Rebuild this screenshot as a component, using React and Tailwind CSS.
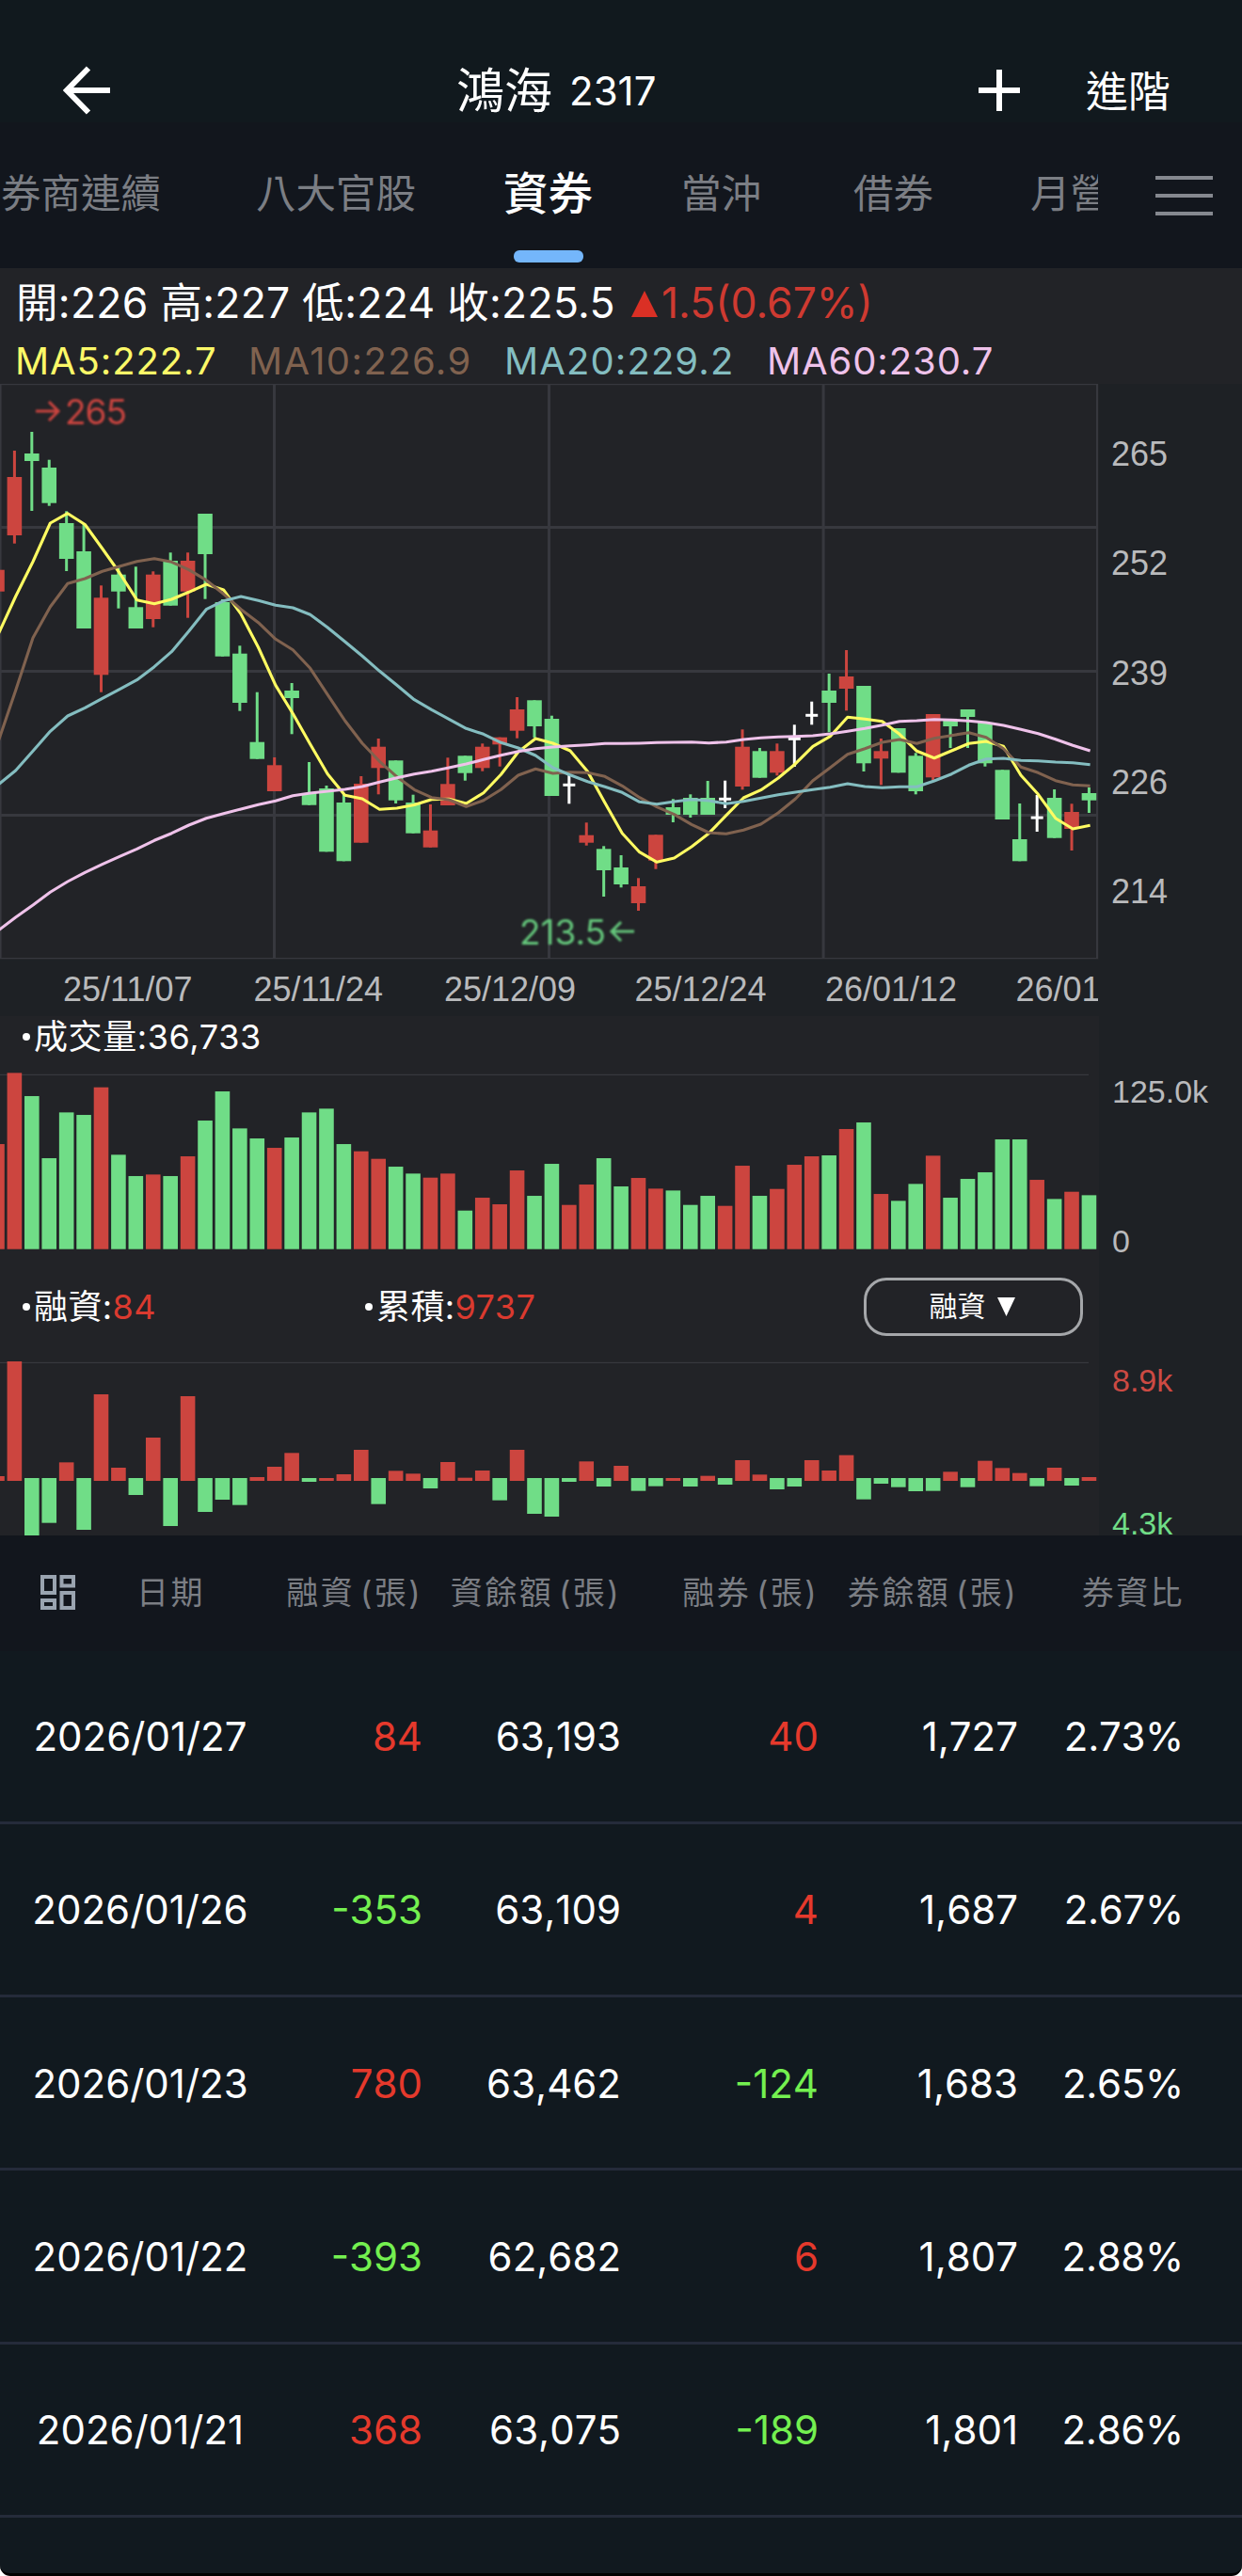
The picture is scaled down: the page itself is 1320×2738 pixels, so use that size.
const RED = "#cc453f";
const GREEN = "#70dd87";
const PITCH = 18.42;
const BAR_W = 15.6;
const barX = (i) => 7.6 + PITCH * (i - 1);
const midX = (i) => 15.4 + PITCH * (i - 1);
const lineX = (i) => 16.6 + PITCH * (i - 1);

/* [colour, high, body top, body bottom, low] */
const CANDLES = [
  ["r", 605.7, 605.7, 628.7, 628.7], ["r", 479, 507, 569, 577.7], ["g", 459, 482, 490, 543],
  ["g", 488.7, 497, 534.7, 537.7], ["g", 543.3, 556, 594, 607], ["g", 557, 586, 668, 668],
  ["r", 622.3, 635.3, 717.3, 735.7], ["g", 603, 610.7, 628.7, 646.7], ["g", 602.3, 645.3, 668, 668],
  ["r", 607.3, 610.7, 658, 666.7], ["g", 587.3, 596, 643.7, 643.7], ["r", 587.3, 596, 628.7, 656.7],
  ["g", 546, 546, 589, 636.7], ["g", 637, 640, 697.7, 697.7], ["g", 686.3, 694.7, 747, 755.7],
  ["g", 735.7, 788.7, 806.7, 806.7], ["r", 805, 813.3, 841, 841], ["g", 726, 734, 742, 780.3],
  ["g", 810, 843, 855.7, 855.7], ["g", 835, 838, 905.3, 905.3], ["g", 844, 853, 915.3, 915.3],
  ["r", 825, 833, 895.7, 895.7], ["r", 785, 793.7, 816.3, 844.3], ["g", 808.3, 808.3, 850.7, 854],
  ["g", 844.7, 853, 885.7, 885.7], ["r", 855, 882.7, 900.7, 900.7], ["r", 805.3, 833.3, 856, 856],
  ["g", 803.3, 803.3, 821.7, 829.7], ["r", 790.3, 793.7, 816.3, 819.7], ["r", 783.7, 783.7, 791.3, 814.7],
  ["r", 741, 754, 776.7, 784.7], ["g", 744.3, 744.3, 772, 784], ["g", 760.7, 764, 846, 846],
  ["w", 824, 832.8, 835.8, 854.3], ["r", 874.3, 887.7, 895.7, 898.7], ["g", 899.3, 902.3, 925, 953],
  ["g", 909, 922, 940, 943.3], ["r", 933.3, 942, 960, 968], ["r", 887.3, 887.3, 914.7, 923.7],
  ["g", 849.3, 858, 866, 874], ["g", 844.3, 848, 866, 869], ["g", 830, 848, 866, 866],
  ["w", 829.7, 847.8, 850.8, 859], ["r", 775.3, 793.7, 836, 839.3], ["g", 795, 798.3, 826.7, 826.7],
  ["r", 790.3, 798.3, 821.3, 824.3], ["w", 770.3, 783.8, 786.8, 815], ["w", 745.7, 758.8, 761.8, 770.3],
  ["g", 716, 734, 747, 778.3], ["r", 691, 719, 732, 755.3], ["g", 729, 729, 811.3, 820],
  ["r", 785, 798.3, 806.3, 834.3], ["g", 774, 774, 821.3, 821.3], ["g", 800.3, 803.3, 841, 844.3],
  ["r", 759, 759, 826.3, 829.3], ["g", 765, 765, 772, 795], ["g", 754, 754, 762, 795],
  ["g", 768, 768, 811.3, 814.7], ["g", 818.3, 818.3, 871, 871], ["g", 854, 892, 915.3, 915.3],
  ["w", 845, 867.6, 870.6, 884], ["g", 839, 848, 890.7, 890.7], ["r", 854.3, 863, 881, 904],
  ["g", 837, 843, 850.7, 864],
];

const MA5 = [674, 634, 597, 556, 545.7, 557.5, 583, 609, 637.7, 641.7, 637, 629.3, 621, 627, 652.7, 688, 728.4, 758.5, 791, 822.7, 845.3, 849, 860.3, 859, 855.5, 849.7, 849.3, 854, 842.7, 823.3, 799.3, 785, 790, 798, 820, 853.3, 885.7, 905.7, 916.3, 912, 900, 885.7, 866.7, 848, 839.7, 827, 811.7, 793.3, 782.7, 762.3, 764.3, 766.7, 780.3, 798.3, 805.7, 798, 790.3, 788, 793.3, 824, 844.3, 869.7, 881, 877.3];
const MA10 = [788, 734, 678, 645, 620.3, 615, 607.3, 602, 596.7, 593.7, 597.3, 605.7, 616.7, 631.3, 647.7, 661.7, 679.3, 690.7, 710.3, 738.3, 766, 790, 809.3, 825.7, 839.3, 847.7, 850, 857.3, 850.7, 839.3, 824, 817.3, 822, 820.7, 821.3, 825.3, 835.3, 847.7, 857.7, 865.7, 876.3, 885, 886.3, 882.3, 876, 864, 849, 829.7, 816, 801.7, 795.7, 789, 786, 790.3, 784.7, 781.7, 778.7, 783.7, 795.7, 815.3, 821.3, 829.7, 834.3, 835.3];
const MA20 = [834, 819, 798.3, 777.3, 761, 752.3, 742.3, 732.7, 722.7, 708.7, 692.7, 670.7, 647.7, 638.7, 634, 638.3, 643.3, 646, 653.3, 667, 682, 697.3, 713.3, 728.3, 743.7, 754.3, 764.3, 774.3, 780.3, 789.3, 795, 803, 816, 823.7, 830.7, 836.3, 842.3, 852.3, 854.7, 852, 849.7, 851, 854.3, 851.7, 848.3, 844.7, 842, 839.3, 836.7, 833, 836, 837.3, 836.3, 836.3, 830, 822.7, 813.3, 806.7, 806, 808.3, 808.7, 810, 810.7, 812.7];
const MA60 = [989, 975, 962, 948.3, 937, 927.3, 918.7, 910.3, 902.3, 893.3, 885.7, 877, 869.7, 864.7, 860, 855.3, 851.3, 845.7, 843, 841, 839, 836, 831.3, 826.7, 822.7, 819.7, 816, 812, 807.3, 802.7, 798.7, 795.7, 794, 792.7, 791.7, 790.3, 790.3, 790, 789.3, 789, 788.7, 789.7, 788.7, 786, 784.3, 783.3, 782.7, 782, 780, 777.3, 774.3, 770.7, 766.7, 766, 764.7, 765.3, 766.3, 768, 771, 775.3, 779.7, 785.7, 792.3, 798];

/* Bar heights in thirds of a pixel */
const VOLUME = [335, 562, 488, 290, 436, 428, 516, 301, 233, 238, 233, 296, 410, 503, 385, 353, 323, 356, 436, 448, 335, 312, 288, 263, 241, 228, 241, 123, 164, 143, 251, 170, 272, 141, 206, 290, 200, 227, 193, 187, 141, 170, 138, 266, 170, 192, 269, 296, 299, 383, 404, 176, 154, 208, 298, 164, 224, 245, 350, 350, 221, 160, 183, 172];
const VOLUME_COLORS = "rrggggrggrgrggggrggggrrggrrgrrrggrrggrrgggrrgrrrgrgrggrgggggrgrg";

/* Positive = increase, negative = decrease */
const MARGIN = [15, 381, -186, -143, 59, -165, 276, 42, -54, 138, -153, 270, -108, -69, -86, 12, 45, 89, -12, 9, 21, 99, -83, 32, 23, -33, 60, 10, 33, -71, 99, -114, -123, -12, 62, -27, 48, -41, -26, 9, -27, 16, -21, 66, 20, -36, -27, 66, 33, 82, -68, -18, -29, -42, -41, 29, -29, 64, 41, 25, -26, 42, -24, 12];

const COLORS = { r: RED, g: GREEN, w: "#ffffff" };
const points = (arr) => arr.map((y, i) => `${lineX(i).toFixed(1)},${y}`).join(" ");

function CandleChart() {
  return (
    <svg className="block h-[612px] w-[1168px] shrink-0" viewBox="0 408 1168 612">
      <g fill="#37383e">
        <rect x="0" y="408" width="1167" height="1.2" />
        <rect x="0" y="559" width="1167" height="3" />
        <rect x="0" y="712" width="1167" height="3" />
        <rect x="0" y="865" width="1167" height="3" />
        <rect x="0" y="1018" width="1167" height="1.2" />
        <rect x="0" y="408" width="1.6" height="611" />
        <rect x="290" y="408" width="3" height="611" />
        <rect x="582" y="408" width="3" height="611" />
        <rect x="873.6" y="408" width="3" height="611" />
        <rect x="1165" y="408" width="2" height="611" />
      </g>
      {CANDLES.map(([c, hi, top, bot, lo], i) => (
        <g key={i} fill={COLORS[c]}>
          <rect x={midX(i) - 1.5} y={hi} width="3" height={lo - hi} />
          <rect x={midX(i) - (c === "w" ? 6.5 : 7.8)} y={top} width={c === "w" ? 13 : BAR_W} height={bot - top} />
        </g>
      ))}
      <g fill="none" strokeWidth="3.1" strokeLinejoin="round">
        <polyline points={points(MA5)} stroke="#fffb62" />
        <polyline points={points(MA10)} stroke="#80624f" />
        <polyline points={points(MA20)} stroke="#84bdc0" />
        <polyline points={points(MA60)} stroke="#efc2ea" />
      </g>
      <g className="font-['Inter'] blur-[0.8px]" fontSize="37">
        <text x="69" y="451" fill="#c9443f" textLength="66">265</text>
        <path d="M38 437H62M52 427L62 437L52 447" fill="none" stroke="#c9443f" strokeWidth="3" />
        <text x="552" y="1004" fill="#64c67b" textLength="92">213.5</text>
        <path d="M674 990H650M660 980L650 990L660 1000" fill="none" stroke="#64c67b" strokeWidth="3" />
      </g>
    </svg>
  );
}

function VolumeChart() {
  return (
    <svg className="block h-[190px] w-[1168px]" viewBox="0 1140 1168 190">
      <rect x="0" y="1141.8" width="1157" height="1.2" fill="#37383e" />
      {VOLUME.map((h, i) => (
        <rect key={i} x={barX(i)} y={1327.7 - h / 3} width={BAR_W} height={h / 3} fill={COLORS[VOLUME_COLORS[i]]} />
      ))}
    </svg>
  );
}

function MarginChart() {
  return (
    <svg className="block h-[186px] w-[1168px]" viewBox="0 1446 1168 186">
      <rect x="0" y="1447.8" width="1157" height="1.2" fill="#37383e" />
      {MARGIN.map((v, i) => (
        <rect key={i} x={barX(i)} y={v > 0 ? 1574 - v / 3 : 1571} width={BAR_W} height={Math.abs(v) / 3} fill={v > 0 ? RED : GREEN} />
      ))}
    </svg>
  );
}

function TopBar() {
  return (
    <header className="flex h-[130px] items-end bg-[#11191e] pb-[4px] pl-[67px]">
      <div className="flex h-[60px] w-full items-center">
        <svg className="h-[52px] w-[52px]" viewBox="0 0 52 52" fill="none" stroke="#fff" strokeWidth="6">
          <path d="M50 26H5M27 2.5L4 26L27 49.5" />
        </svg>
        <h1 className="ml-[366px] flex w-[400px] items-center whitespace-nowrap pt-[2px] text-[51px] leading-[60px] text-white">
          <span>鴻海</span>
          <span className="ml-[18px] text-[42px]">2317</span>
        </h1>
        <svg className="ml-[155px] h-[44px] w-[44px]" viewBox="0 0 44 44" fill="none" stroke="#fff" strokeWidth="6">
          <path d="M22 0V44M0 22H44" />
        </svg>
        <span className="ml-[70px] whitespace-nowrap pt-[3px] text-[45px] leading-[60px] text-white">進階</span>
      </div>
    </header>
  );
}

function Tabs() {
  return (
    <nav className="flex h-[155px] bg-[#12161d]">
      <div className="flex h-full w-[1167px] overflow-hidden whitespace-nowrap text-[42.5px] leading-[60px] text-[#7b7e84]">
        <span className="ml-px pt-[46px]">券商連續</span>
        <span className="ml-[101px] pt-[46px]">八大官股</span>
        <span className="ml-[93px] flex flex-col items-center pt-[46px] text-[47.5px] font-medium text-white">
          資券
          <i className="mt-[30px] h-[13px] w-[74px] rounded-[6px] bg-[#74b6fb]" />
        </span>
        <span className="ml-[94px] pt-[46px]">當沖</span>
        <span className="ml-[98px] pt-[46px]">借券</span>
        <span className="ml-[103px] pt-[46px]">月營收</span>
      </div>
      <div className="ml-[61px] mt-[57px] flex h-[42px] w-[61px] flex-col justify-between">
        <i className="h-[4px] bg-[#85888f]" />
        <i className="h-[4px] bg-[#85888f]" />
        <i className="h-[4px] bg-[#85888f]" />
      </div>
    </nav>
  );
}

const AXIS = ["265", "252", "239", "226", "214"];
const DATES = ["25/11/07", "25/11/24", "25/12/09", "25/12/24", "26/01/12", "26/01/27"];
const LIB = "font-['Liberation_Sans']";

function Dot() {
  return <i className="mr-[4px] h-[8px] w-[8px] rounded-full bg-white" />;
}

function ChartPanel() {
  return (
    <section className="h-[1347px] overflow-hidden bg-[#222327]">
      <div className="flex h-[72px] items-center whitespace-pre pl-[17px] pt-[3px] text-[44.5px] text-white">
        <span className="tracking-[0.28px]">開:226 高:227 低:224 收:225.5</span>
        <svg className="ml-[17px] h-[28px] w-[28px]" viewBox="0 0 28 28"><path d="M14 0L28 28H0Z" fill="#da3025" /></svg>
        <span className="ml-[4px] text-[#cf3a31]">1.5(0.67%)</span>
      </div>
      <div className="flex h-[51px] items-center whitespace-nowrap pl-[16px] pt-[2px] text-[40px] tracking-[0.9px]">
        <span className="w-[248px] text-[#fbf868]">MA5:222.7</span>
        <span className="w-[272px] tracking-[1.4px] text-[#80624f]">MA10:226.9</span>
        <span className="w-[279px] tracking-[1.1px] text-[#84bdc0]">MA20:229.2</span>
        <span className="text-[#efc2ea]">MA60:230.7</span>
      </div>
      <div className="flex h-[612px]">
        <CandleChart />
        <div className={"flex w-[152px] flex-col bg-[#1e2125] pl-[13px] pt-[45px] text-[36px] leading-[60px] text-[#b9babc] " + LIB}>
          {AXIS.map((v) => <span key={v} className="h-[116.3px] shrink-0">{v}</span>)}
        </div>
      </div>
      <div className="h-[60px] bg-[#1e2125]">
        <div className={"flex h-full w-[1167px] overflow-hidden whitespace-nowrap pl-[67px] text-[36px] leading-[64px] text-[#b9babc] " + LIB}>
          {DATES.map((d) => <span key={d} className="w-[202.5px] shrink-0">{d}</span>)}
        </div>
      </div>
      <div className="flex h-[552px]">
        <div className="w-[1168px]">
          <div className="flex h-[60px] items-center pb-[17px] pl-[24px] text-[36px] tracking-[0.6px] text-white">
            <Dot />
            <span>成交量:36,733</span>
          </div>
          <VolumeChart />
          <div className="flex h-[116px] items-center whitespace-nowrap pl-[24px] pt-px text-[36px] tracking-[0.4px] text-white">
            <div className="flex w-[364px] items-center"><Dot />融資:<span className="text-[#da3a2f]">84</span></div>
            <div className="flex w-[530px] items-center"><Dot />累積:<span className="text-[#da3a2f]">9737</span></div>
            <button className="flex h-[62px] w-[233px] items-center justify-center rounded-[24px] border-3 border-[#a5a7aa] pr-[3px] text-[30px] tracking-normal">
              融資
              <svg className="ml-[12px] h-[20px] w-[19px]" viewBox="0 0 19 20"><path d="M0 0H19L9.5 20Z" fill="#fff" /></svg>
            </button>
          </div>
          <MarginChart />
        </div>
        <div className={"flex w-[152px] flex-col bg-[#1e2125] pl-[14px] text-[34px] leading-[40px] text-[#b9babc] " + LIB}>
          <span className="pt-[60px]">125.0k</span>
          <span className="pt-[119px]">0</span>
          <span className="pt-[108px] text-[#cc4a43]">8.9k</span>
          <span className="pt-[112px] text-[#70dd87]">4.3k</span>
        </div>
      </div>
    </section>
  );
}

const ROWS = [
  ["2026/01/27", "84", "63,193", "40", "1,727", "2.73%"],
  ["2026/01/26", "-353", "63,109", "4", "1,687", "2.67%"],
  ["2026/01/23", "780", "63,462", "-124", "1,683", "2.65%"],
  ["2026/01/22", "-393", "62,682", "6", "1,807", "2.88%"],
  ["2026/01/21", "368", "63,075", "-189", "1,801", "2.86%"],
];
const tone = (v) => (v.startsWith("-") ? "text-[#74f050]" : "text-[#e5392c]");
const COLS = "grid items-center whitespace-nowrap text-right";

function Table() {
  return (
    <section>
      <div className={COLS + " h-[122.5px] grid-cols-[299px_150px_211px_210px_212px_177px] grid-rows-1 bg-[#12161d] pb-px text-[34px] tracking-[2.4px] text-[#7b7e84] [word-spacing:-6px]"}>
        <div className="flex items-center pl-[43px]">
          <svg className="h-[37px] w-[37px]" viewBox="0 0 37 37" fill="none" stroke="#9aa4b0" strokeWidth="4">
            <path d="M2 2H15V19H2ZM22.5 2H35V11.5H22.5ZM2 27H15V35H2ZM22.5 19H35V35H22.5Z" />
          </svg>
          <span className="ml-[65px]">日期</span>
        </div>
        <span>融資 (張)</span>
        <span>資餘額 (張)</span>
        <span>融券 (張)</span>
        <span>券餘額 (張)</span>
        <span>券資比</span>
      </div>
      {ROWS.map((r) => (
        <div key={r[0]} className={COLS + " h-[184.3px] grid-cols-[298px_151px_211px_210px_212px_176px] border-b-3 border-[#252b3a] pt-px text-[42px] text-white [font-kerning:none]"}>
          <span className="text-center">{r[0]}</span>
          <span className={tone(r[1])}>{r[1]}</span>
          <span>{r[2]}</span>
          <span className={tone(r[3])}>{r[3]}</span>
          <span>{r[4]}</span>
          <span className="tracking-[-0.3px]">{r[5]}</span>
        </div>
      ))}
    </section>
  );
}

export default function App() {
  return (
    <div className="bg-white">
      <main className="h-[2738px] w-[1320px] overflow-hidden rounded-b-[11px] border-b-3 border-black bg-[#11191f] font-['Inter','Noto_Sans_CJK_TC',sans-serif]">
        <TopBar />
        <Tabs />
        <ChartPanel />
        <Table />
      </main>
    </div>
  );
}
